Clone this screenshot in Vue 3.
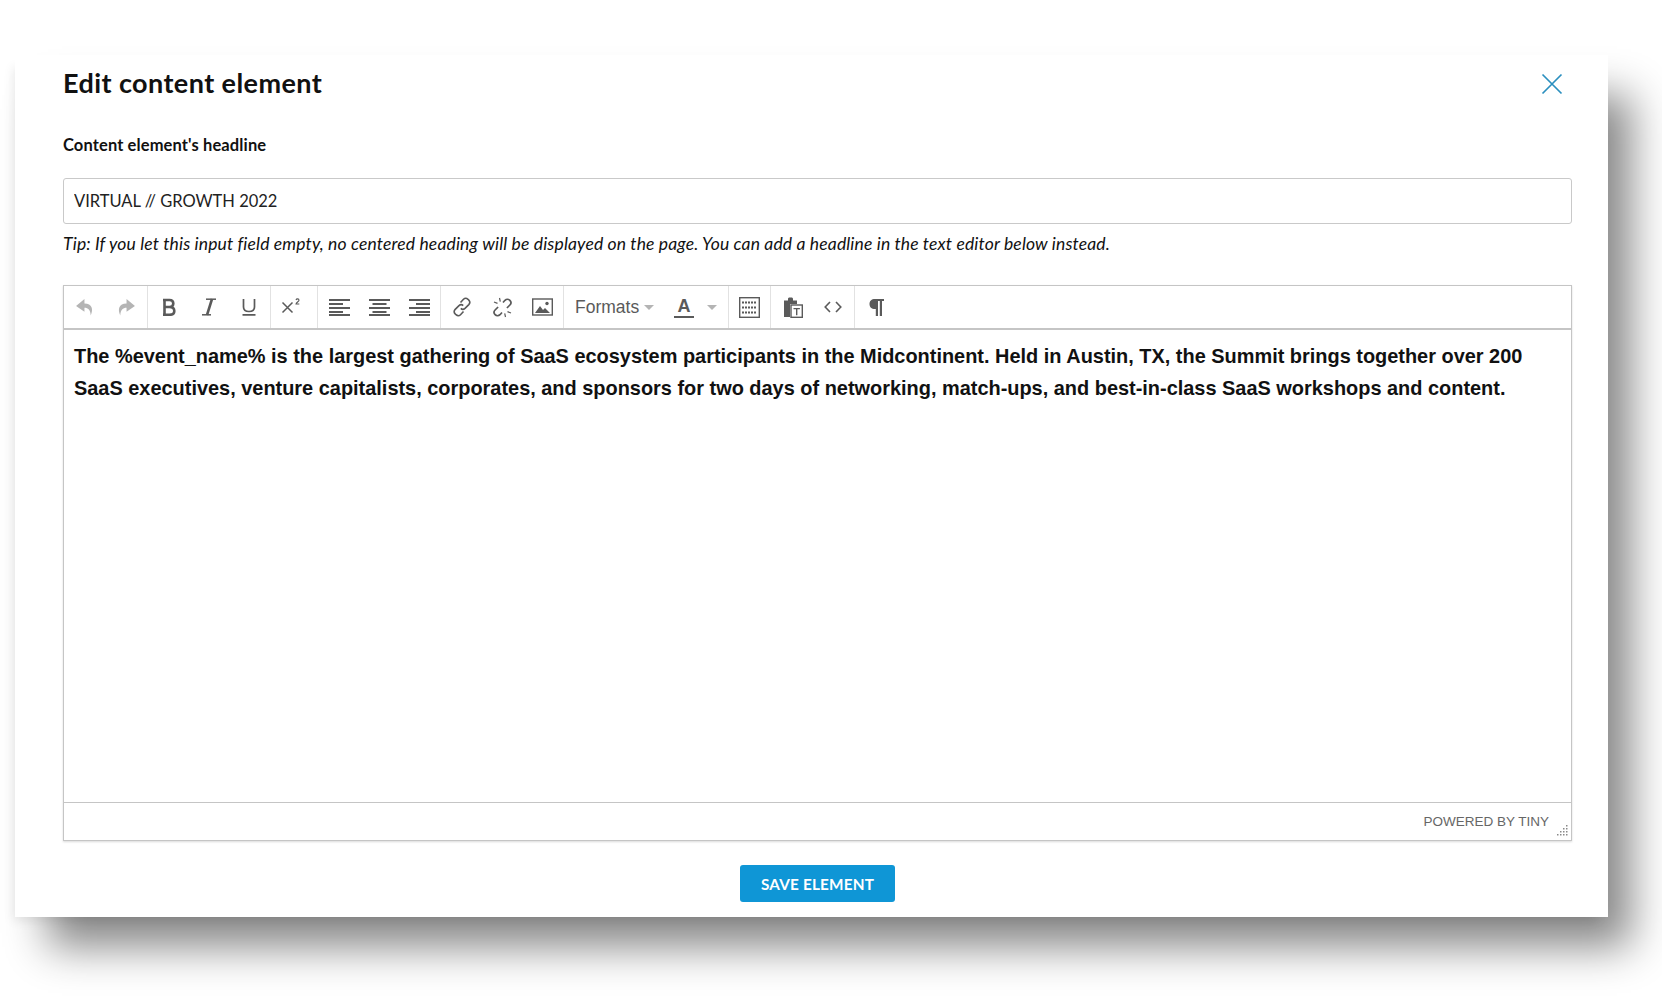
<script setup>
import { ref } from 'vue';

const headline = ref('VIRTUAL // GROWTH 2022');

const handleDots = [
  [10, 0], [10, 3], [7, 3], [10, 6], [7, 6], [4, 6], [10, 9], [7, 9], [4, 9], [1, 9]
];
</script>

<template>
  <div class="page">
    <div class="modal">
      <header class="modal-head">
        <h1>Edit content element</h1>
        <button class="close" aria-label="Close">
          <svg width="22" height="22" viewBox="0 0 22 22">
            <path d="M1.500 1.500 20.500 20.500M20.500 1.500 1.500 20.500" stroke="#2b8fbf" stroke-width="1.700" fill="none" />
          </svg>
        </button>
      </header>

      <label class="field-label">Content element's headline</label>
      <input v-model="headline" class="text-input" type="text" />
      <p class="tip">Tip: If you let this input field empty, no centered heading will be displayed on the page. You can add a headline in the text editor below instead.</p>

      <div class="editor">
        <div class="toolbar">
          <div class="group first">
            <span class="tool">
              <svg width="21" height="19" viewBox="0 0 20 18" fill="#b4b4b4"><path d="M9 1 1 7.500 9 13V9.200c3.600 0 5.600 2 6 7.300 2.600-6 1.400-11-6-11.300z" /></svg>
            </span>
            <span class="tool">
              <svg width="21" height="19" viewBox="0 0 20 18" fill="#b4b4b4"><path d="M11 1l8 6.500L11 13V9.200c-3.600 0-5.600 2-6 7.300-2.600-6-1.400-11 6-11.300z" /></svg>
            </span>
          </div>
          <div class="group">
            <span class="tool">
              <svg width="14" height="18" viewBox="0 0 14 18" fill="none" stroke="#5a5a5a" stroke-width="2.600"><path d="M2.500 1v16M1 2h6.500c2.500 0 3.800 1.400 3.800 3.500S10 9 7.500 9H2.500m5 0c3 0 4.800 1.500 4.800 4s-1.800 3.800-4.800 3.800H1" /></svg>
            </span>
            <span class="tool">
              <svg width="16" height="18" viewBox="0 0 16 18" fill="none" stroke="#5a5a5a"><path d="M5 1.200h10" stroke-width="1.500" /><path d="M11 1 6 17" stroke-width="2.600" /><path d="M1 16.800h9" stroke-width="1.500" /></svg>
            </span>
            <span class="tool">
              <svg width="14" height="18" viewBox="0 0 14 18" fill="none" stroke="#5a5a5a" stroke-width="1.700"><path d="M1.500 1v8c0 3 2 4.500 5.500 4.500s5.500-1.500 5.500-4.500V1M.5 16.800h13" /></svg>
            </span>
          </div>
          <div class="group narrow">
            <span class="tool sup">
              <svg width="20" height="18" viewBox="0 0 20 18" fill="none" stroke="#5a5a5a"><path d="M1.500 4.500l10 10M11.500 4.500l-10 10" stroke-width="1.500" /><path d="M15 2c.5-1.500 3-1.500 3 .200 0 1.300-2.800 2.300-3 3.800h3.300" stroke-width="1.100" /></svg>
            </span>
          </div>
          <div class="group">
            <span class="tool">
              <svg width="21" height="18" viewBox="0 0 21 18" fill="#5a5a5a"><rect y="1" width="21" height="2" /><rect y="5" width="14" height="2" /><rect y="9" width="21" height="2" /><rect y="13" width="14" height="2" /><rect y="16" width="21" height="2" /></svg>
            </span>
            <span class="tool">
              <svg width="21" height="18" viewBox="0 0 21 18" fill="#5a5a5a"><rect y="1" width="21" height="2" /><rect x="3.500" y="5" width="14" height="2" /><rect y="9" width="21" height="2" /><rect x="3.500" y="13" width="14" height="2" /><rect y="16" width="21" height="2" /></svg>
            </span>
            <span class="tool">
              <svg width="21" height="18" viewBox="0 0 21 18" fill="#5a5a5a"><rect y="1" width="21" height="2" /><rect x="7" y="5" width="14" height="2" /><rect y="9" width="21" height="2" /><rect x="7" y="13" width="14" height="2" /><rect y="16" width="21" height="2" /></svg>
            </span>
          </div>
          <div class="group">
            <span class="tool">
              <svg width="20" height="20" viewBox="0 0 20 20" fill="none" stroke="#5a5a5a" stroke-width="1.600"><path d="M8.500 5.500l3-3.200c1.300-1.300 3.200-1.200 4.500 0l.8.800c1.200 1.300 1.200 3.200 0 4.500l-3.800 3.800c-1.300 1.200-3 1.200-4.200 0" /><path d="M11.500 14.500l-3 3.200c-1.300 1.300-3.200 1.200-4.500 0l-.8-.8c-1.200-1.300-1.200-3.200 0-4.500l3.800-3.800c1.300-1.200 3-1.200 4.200 0" /></svg>
            </span>
            <span class="tool">
              <svg width="21" height="21" viewBox="0 0 21 21" fill="none" stroke="#5a5a5a"><path d="M11 5.500l2-2.200c1.400-1.400 3.600-1.400 4.900 0s1.300 3.400 0 4.700l-3 3" stroke-width="1.700" /><path d="M10 15.500l-2 2.200c-1.400 1.400-3.600 1.400-4.900 0s-1.300-3.400 0-4.700l3-3" stroke-width="1.700" /><path d="M7.500 1l.8 3.600M2 5l3.500 1.400M13.500 20l-.8-3.600M19 16l-3.500-1.400" stroke-width="1.200" /></svg>
            </span>
            <span class="tool">
              <svg width="21" height="18" viewBox="0 0 21 18"><rect x=".7" y="1" width="19.600" height="16" fill="none" stroke="#5a5a5a" stroke-width="1.400" /><path d="M3 15l5-7 3 4 2-2 5 5z" fill="#5a5a5a" /><circle cx="15" cy="5.500" r="1.700" fill="#5a5a5a" /></svg>
            </span>
          </div>
          <div class="group text-group">
            <span class="formats">Formats<i class="caret"></i></span>
            <span class="color-tool">
              <span class="color-a">A</span>
              <i class="caret"></i>
            </span>
          </div>
          <div class="group single">
            <span class="tool">
              <svg width="21" height="21" viewBox="0 0 21 21" fill="none" stroke="#5a5a5a"><rect x=".7" y=".7" width="19.600" height="19.600" stroke-width="1.400" /><path d="M3 5.500h15M3 10.500h15M3 15.500h15" stroke-width="2" stroke-dasharray="2 1" /></svg>
            </span>
          </div>
          <div class="group double">
            <span class="tool">
              <svg width="20" height="21" viewBox="0 0 20 21"><path d="M1 3.500h4V2c0-1 .7-1.500 1.500-1.500h2C9.300.5 10 1 10 2v1.500h4V7H7v13H1z" fill="#5a5a5a" /><rect x="8" y="8" width="11.300" height="12.300" fill="#fff" stroke="#5a5a5a" stroke-width="1.400" /><path d="M10.500 11h6.400v1.300h-2.500v6h-1.400v-6h-2.500z" fill="#5a5a5a" /></svg>
            </span>
            <span class="tool">
              <svg width="18" height="12" viewBox="0 0 18 12" fill="none" stroke="#5a5a5a" stroke-width="1.600"><path d="M6 1 1.200 6 6 11M12 1l4.800 5L12 11" /></svg>
            </span>
          </div>
          <div class="group last">
            <span class="tool">
              <svg width="15" height="18" viewBox="0 0 15 18" fill="#5a5a5a"><path d="M6 1h9v2h-2v15h-2.200V3H9v15H6.800v-7H6C2.500 11 .5 9 .5 6S2.500 1 6 1z" /></svg>
            </span>
          </div>
        </div>

        <div class="editor-body">
          <p>The %event_name% is the largest gathering of SaaS ecosystem participants in the Midcontinent. Held in Austin, TX, the Summit brings together over 200 SaaS executives, venture capitalists, corporates, and sponsors for two days of networking, match-ups, and best-in-class SaaS workshops and content.</p>
        </div>

        <div class="statusbar">
          <span>POWERED BY TINY</span>
          <svg class="resize" width="12" height="12" viewBox="0 0 12 12" fill="#8a8a8a">
            <rect v-for="(d, i) in handleDots" :key="i" :x="d[0]" :y="d[1]" width="1.500" height="1.500" />
          </svg>
        </div>
      </div>

      <div class="actions">
        <button class="save-btn">SAVE ELEMENT</button>
      </div>
    </div>
  </div>
</template>

<style>
body {
  background: #fff;
}
</style>

<style scoped>
.page {
  height: 1000px;
  box-sizing: border-box;
  padding: 55px 0 0 15px;
  overflow: hidden;
  font-family: Lato, "Open Sans", sans-serif;
  color: #111;
}

.modal {
  width: 1593px;
  height: 862px;
  box-sizing: border-box;
  padding: 0 36px 0 48px;
  background: #fff;
  box-shadow: 28px 35px 40px -5px rgba(0, 0, 0, 0.47), -6px 8px 10px -4px rgba(0, 0, 0, 0.08);
}

.modal-head {
  display: flex;
  align-items: center;
  justify-content: space-between;
  padding: 14px 9px 0 0;
  height: 30px;
}

.modal-head h1 {
  margin: 0 0 3px;
  font-size: 27px;
  font-weight: 700;
  letter-spacing: 0.42px;
}

.close {
  padding: 0;
  border: 0;
  background: none;
  line-height: 0;
}

.field-label {
  display: block;
  margin-top: 36px;
  font-size: 16.500px;
  font-weight: 700;
  line-height: 20px;
  letter-spacing: 0.12px;
}

.text-input {
  display: block;
  width: 100%;
  height: 46px;
  margin-top: 23px;
  padding: 0 10px;
  box-sizing: border-box;
  border: 1px solid #c9c9c9;
  border-radius: 3px;
  font: 16.500px Lato, sans-serif;
  color: #222;
  outline: none;
}

.tip {
  margin: 10px 0 0;
  font-size: 17.500px;
  font-style: italic;
  line-height: 20px;
  letter-spacing: 0.15px;
}

.editor {
  margin-top: 31px;
  border: 1px solid #c5c5c5;
  box-shadow: 0 1px 2px rgba(0, 0, 0, 0.15);
}

.toolbar {
  display: flex;
  height: 42px;
  border-bottom: 2px solid #c5c5c5;
}

.group {
  display: flex;
  align-items: center;
  padding: 0 1px;
  border-right: 1px solid #e2e2e2;
}

.group.first {
  padding-left: 1px;
  padding-right: 2px;
}

.group.narrow {
  padding: 0 3px;
}

.group.single {
  padding: 0 1px 0 0;
}

.group.double {
  padding: 0 1px 0 2px;
}

.group.last {
  border-right: 0;
}

.tool {
  display: flex;
  align-items: center;
  justify-content: center;
  width: 40px;
  height: 100%;
}

.sup {
  margin-left: -3px;
  padding-right: 3px;
}

.text-group {
  width: 165px;
  box-sizing: border-box;
  padding: 0 0 0 11px;
  color: #5a5a5a;
}

.formats {
  display: flex;
  align-items: center;
  width: 99px;
  font: 17.500px "Liberation Sans", Arial, sans-serif;
}

.caret {
  display: inline-block;
  margin-left: 5px;
  border-top: 5px solid #b4b4b4;
  border-left: 5px solid transparent;
  border-right: 5px solid transparent;
}

.color-tool {
  display: flex;
  align-items: center;
}

.color-a {
  width: 20px;
  border-bottom: 2px solid #5a5a5a;
  font: 700 18px/20px "Liberation Sans", Arial, sans-serif;
  text-align: center;
}

.color-tool .caret {
  margin-left: 13px;
}

.editor-body {
  height: 473px;
  box-sizing: border-box;
  padding: 10px 10px 0;
  border-bottom: 1px solid #c5c5c5;
}

.editor-body p {
  margin: 0;
  font: 700 19.930px/32px "Liberation Sans", Arial, sans-serif;
  color: #111;
}

.statusbar {
  position: relative;
  height: 37px;
  box-sizing: border-box;
  padding: 0 22px 0 0;
  display: flex;
  align-items: center;
  justify-content: flex-end;
  font: 13.500px "Liberation Sans", Arial, sans-serif;
  color: #666;
}

.resize {
  position: absolute;
  right: 3px;
  bottom: 3px;
}

.actions {
  display: flex;
  justify-content: center;
  margin-top: 24px;
}

.save-btn {
  width: 155px;
  height: 37px;
  border: 0;
  border-radius: 3px;
  background: #0f96d6;
  color: #fff;
  font: 700 15.300px Lato, sans-serif;
  letter-spacing: 0.2px;
}
</style>
